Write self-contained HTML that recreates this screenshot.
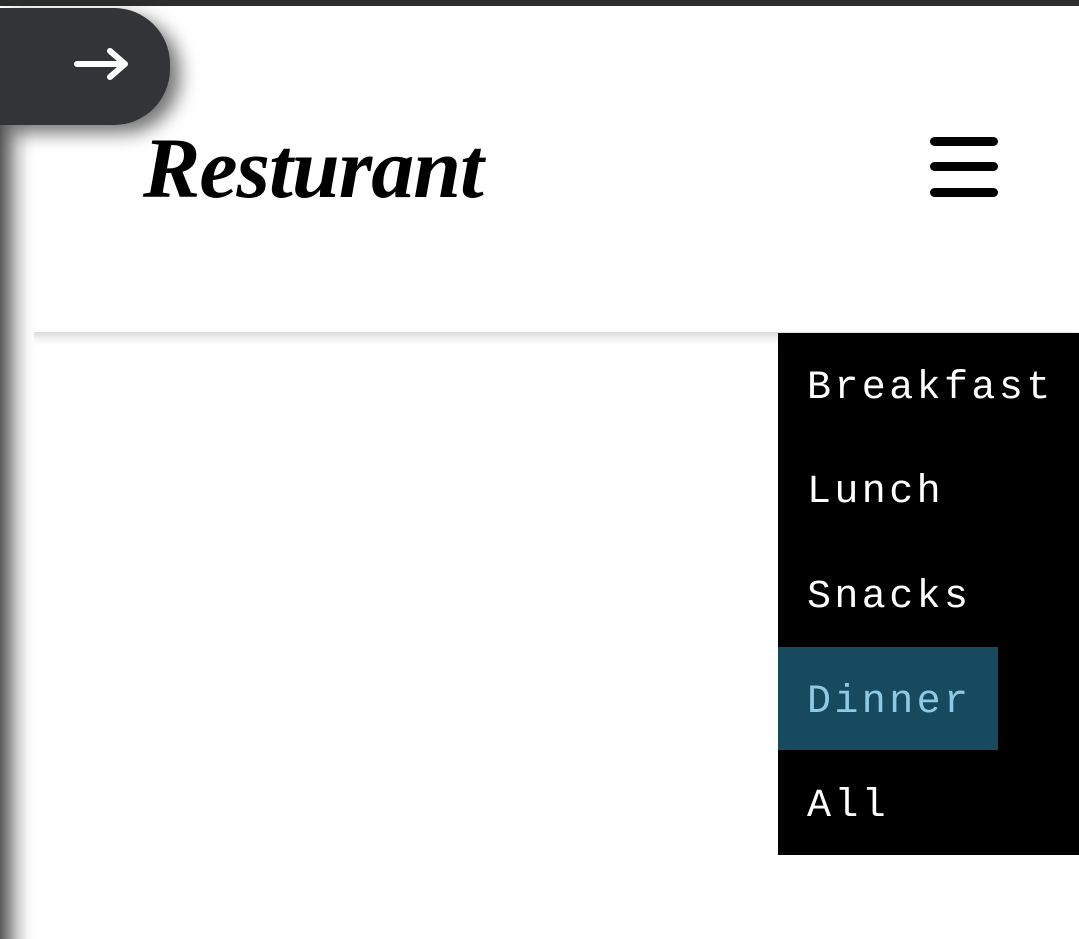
<!DOCTYPE html>
<html><head><meta charset="utf-8"><style>
html,body{margin:0;padding:0;width:1079px;height:939px;overflow:hidden;background:#fff;font-family:"Liberation Sans",sans-serif}
.top{position:absolute;left:0;top:0;width:1079px;height:6px;background:#2e2e2e}
.header{position:absolute;left:0;top:6px;width:1079px;height:326px;background:#fff;box-shadow:0 4px 10px rgba(0,0,0,.18)}
.strip{position:absolute;left:0;top:110px;width:34px;height:829px;background:linear-gradient(to right,#5a5a5a 0,#8a8a8a 8px,#cfcfcf 18px,#f6f6f6 28px,#fff 34px)}
.btn{position:absolute;left:0;top:8px;width:170px;height:117px;background:#333438;border-radius:0 56px 56px 0;box-shadow:10px 8px 18px rgba(0,0,0,.55)}
.logo{position:absolute;left:143px;top:118px;font-family:"Liberation Serif",serif;font-style:italic;font-weight:bold;font-size:86px;color:#000;letter-spacing:-1px}
.bar{position:absolute;left:930px;width:68px;height:9px;background:#000;border-radius:5px}
.menu{position:absolute;left:778px;top:333px;width:301px;height:522px;background:#000}
.item{position:absolute;left:0;height:104px;line-height:112px;padding-left:29px;font-family:"Liberation Mono",monospace;font-size:40px;letter-spacing:3.4px;color:#fff}
.sel{background:#174a5e;color:#8ecae6;width:191px}
</style></head><body>
<div class="header"></div>
<div class="top"></div>
<div class="strip"></div>
<div class="btn"><svg width="170" height="117" style="position:absolute;left:0;top:0"><path d="M77 56 H125 M110 43 L125 56 L110 69" stroke="#fff" stroke-width="6" fill="none" stroke-linecap="round" stroke-linejoin="round"/></svg></div>
<div class="logo">Resturant</div>
<div class="bar" style="top:137px"></div>
<div class="bar" style="top:162px"></div>
<div class="bar" style="top:188px"></div>
<div class="menu">
<div class="item" style="top:0">Breakfast</div>
<div class="item" style="top:104px">Lunch</div>
<div class="item" style="top:209px">Snacks</div>
<div class="item sel" style="top:314px;height:103px">Dinner</div>
<div class="item" style="top:418px">All</div>
</div>
</body></html>
